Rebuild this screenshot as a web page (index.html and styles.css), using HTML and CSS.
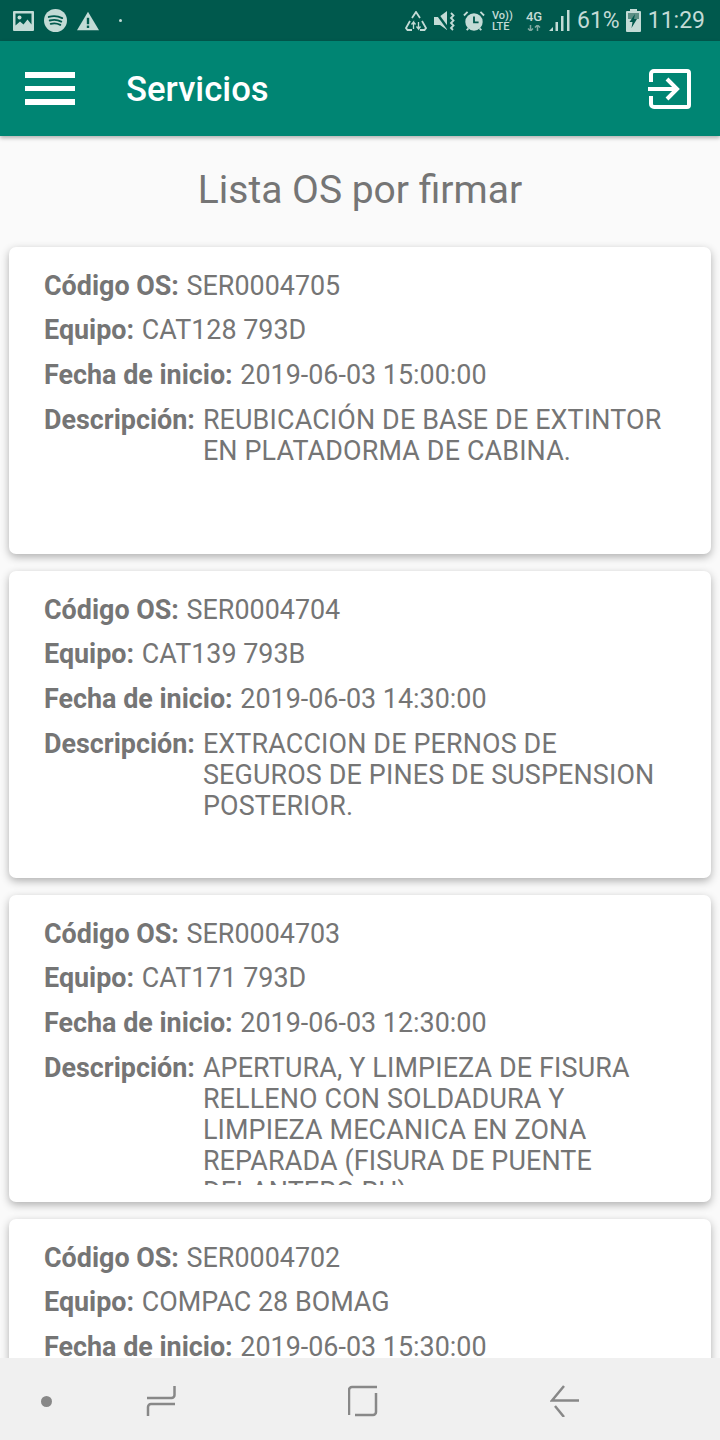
FILE: index.html
```html
<!DOCTYPE html>
<html lang="es">
<head>
    <meta charset="UTF-8">
    <meta name="viewport" content="width=device-width, initial-scale=1.0">
    <title>Servicios</title>
    <link rel="stylesheet" href="styles.css">
</head>
<body>
<div class="screen">

    <div class="status-bar">
        <div class="status-left">
            <svg width="21" height="20" viewBox="0 0 21 20">
                <path fill="#c3dbd6" fill-rule="evenodd" d="M1 0h19a1 1 0 0 1 1 1v18a1 1 0 0 1-1 1H1a1 1 0 0 1-1-1V1a1 1 0 0 1 1-1zM2.500 2.500v12l4.500-4 3.500 3 4-5 4 5V2.500z"/>
                <circle cx="6.500" cy="6.500" r="2" fill="#c3dbd6"/>
            </svg>
            <svg width="23" height="23" viewBox="0 0 24 24">
                <circle cx="12" cy="12" r="12" fill="#c3dbd6"/>
                <path d="M5 8.300c4.300-1.300 9.500-1 14 1.200M6 12c3.700-1 8.300-.8 12 1.100M7 15.500c3.200-.8 6.800-.6 10 1" fill="none" stroke="#00594d" stroke-width="2" stroke-linecap="round"/>
            </svg>
            <svg width="22" height="20" viewBox="0 0 24 20">
                <path fill="#c3dbd6" d="M12 0l12 20H0z"/>
                <rect x="10.700" y="6.500" width="2.600" height="7" fill="#00594d"/>
                <rect x="10.700" y="15" width="2.600" height="2.600" fill="#00594d"/>
            </svg>
            <span class="st-dot"></span>
        </div>
        <div class="status-right">
            <svg width="22" height="20" viewBox="0 0 22 20" fill="none" stroke="#c3dbd6" stroke-width="1.800">
                <path d="M7 7l4-6 4 6"/>
                <path d="M5 10l-4 7 1.500 2H7M17 10l4 7-1.500 2H15"/>
                <path d="M8.500 18v-7l-2 2.500M8.500 11l2 2.500M13.500 11v7l-2-2.500M13.500 18l2-2.500" stroke-width="1.300"/>
            </svg>
            <svg width="22" height="22" viewBox="0 0 22 22" fill="#c3dbd6">
                <path d="M0 7h5l8-6v19l-7-5H0z"/>
                <path d="M1 1l14 19" stroke="#00594d" stroke-width="2.500"/>
                <path d="M0 3l2.500 2.500L0 8l2.500 2.500L0 13l2.500 2.500L0 18l2 2" transform="translate(17 0)" fill="none" stroke="#c3dbd6" stroke-width="1.800"/>
            </svg>
            <svg width="22" height="22" viewBox="0 0 24 24">
                <circle cx="12" cy="13" r="9.500" fill="#c3dbd6"/>
                <path d="M12 7v6.500h5" fill="none" stroke="#00594d" stroke-width="2"/>
                <path d="M1 6l4-4M23 6l-4-4M4 22l2-2M20 22l-2-2" stroke="#c3dbd6" stroke-width="2"/>
            </svg>
            <div class="volte"><span>Vo))</span><span>LTE</span></div>
            <div class="net">
                <span>4G</span>
                <svg width="14" height="6" viewBox="0 0 14 6">
                    <path d="M3.500 6V0M1 3.500L3.500 6 6 3.500" fill="none" stroke="#7fa9a1" stroke-width="1.500"/>
                    <path d="M10.500 0v6M8 2.500L10.500 0 13 2.500" fill="none" stroke="#7fa9a1" stroke-width="1.500"/>
                </svg>
            </div>
            <svg width="21" height="21" viewBox="0 0 21 21" fill="#c3dbd6">
                <path d="M0 21l4-4v4z"/>
                <rect x="6.500" y="12" width="2.500" height="9"/>
                <rect x="12" y="6" width="2.500" height="15"/>
                <rect x="18" y="0" width="2.500" height="21"/>
            </svg>
            <span class="st-text st-battery">61%</span>
            <svg width="15" height="23" viewBox="0 0 15 23">
                <path fill="#c3dbd6" d="M4 0h7v2h3a1 1 0 0 1 1 1v19a1 1 0 0 1-1 1H1a1 1 0 0 1-1-1V3a1 1 0 0 1 1-1h3z"/>
                <rect x="2" y="4" width="11" height="6" fill="#5c8f85"/>
                <path fill="#00594d" d="M9 5L3.500 13h3l-1 6 5.500-9H8z"/>
            </svg>
            <span class="st-text">11:29</span>
        </div>
    </div>

    <div class="app-bar">
        <div class="menu-icon"><span></span><span></span><span></span></div>
        <div class="app-title">Servicios</div>
        <svg width="44" height="40" viewBox="0 0 44 40" fill="none" stroke="#ffffff" stroke-width="4">
            <path d="M4 13V5a3 3 0 0 1 3-3h33a2 2 0 0 1 2 2v32a2 2 0 0 1-2 2H7a3 3 0 0 1-3-3v-8" stroke-linejoin="round"/>
            <path d="M1 20h29M20 10l10 10-10 10"/>
        </svg>
    </div>

    <div class="content">
        <h1 class="page-title">Lista OS por firmar</h1>
        <div class="list">

            <div class="card">
                <div class="row"><b>Código OS:</b> SER0004705</div>
                <div class="row"><b>Equipo:</b> CAT128 793D</div>
                <div class="row"><b>Fecha de inicio:</b> 2019-06-03 15:00:00</div>
                <div class="desc-row">
                    <b>Descripción:</b>
                    <div class="desc">REUBICACIÓN DE BASE DE EXTINTOR EN PLATADORMA DE CABINA.</div>
                </div>
            </div>

            <div class="card">
                <div class="row"><b>Código OS:</b> SER0004704</div>
                <div class="row"><b>Equipo:</b> CAT139 793B</div>
                <div class="row"><b>Fecha de inicio:</b> 2019-06-03 14:30:00</div>
                <div class="desc-row">
                    <b>Descripción:</b>
                    <div class="desc">EXTRACCION DE PERNOS DE SEGUROS DE PINES DE SUSPENSION POSTERIOR.</div>
                </div>
            </div>

            <div class="card">
                <div class="row"><b>Código OS:</b> SER0004703</div>
                <div class="row"><b>Equipo:</b> CAT171 793D</div>
                <div class="row"><b>Fecha de inicio:</b> 2019-06-03 12:30:00</div>
                <div class="desc-row">
                    <b>Descripción:</b>
                    <div class="desc">APERTURA, Y LIMPIEZA DE FISURA RELLENO CON SOLDADURA Y LIMPIEZA MECANICA EN ZONA REPARADA (FISURA DE PUENTE DELANTERO RH)</div>
                </div>
            </div>

            <div class="card">
                <div class="row"><b>Código OS:</b> SER0004702</div>
                <div class="row"><b>Equipo:</b> COMPAC 28 BOMAG</div>
                <div class="row"><b>Fecha de inicio:</b> 2019-06-03 15:30:00</div>
            </div>

        </div>
    </div>

    <div class="nav-bar">
        <span class="nav-dot"></span>
        <svg width="30" height="32" viewBox="0 0 30 32" fill="none" stroke="#888888" stroke-width="2.500">
            <path d="M28.500 1v9a3 3 0 0 1-3 3H1"/>
            <path d="M29 19H5a3 3 0 0 0-3 3v9"/>
        </svg>
        <svg width="30" height="32" viewBox="0 0 30 32" fill="none" stroke="#888888" stroke-width="2.500">
            <path d="M29 2H4a3 3 0 0 0-3 3v25"/>
            <path d="M28 8v19a3 3 0 0 1-3 3H7"/>
        </svg>
        <svg width="30" height="32" viewBox="0 0 30 32" fill="none" stroke="#888888" stroke-width="2.500">
            <path d="M14 1L2 15.500h27"/>
            <path d="M5 21l9 11"/>
        </svg>
    </div>

</div>
</body>
</html>
```

FILE: styles.css
```css
body {
    margin: 0;
    font-family: Roboto, "Liberation Sans", sans-serif;
    color: #757575;
    background: #fafafa;
}

.screen {
    display: flex;
    flex-direction: column;
    width: 720px;
    height: 1440px;
    overflow: hidden;
}

.status-bar {
    display: flex;
    justify-content: space-between;
    align-items: center;
    height: 41px;
    flex-shrink: 0;
    padding: 0 15px 0 13px;
    box-sizing: border-box;
    background: #00594d;
    color: #c3dbd6;
}

.status-left {
    display: flex;
    align-items: center;
    gap: 10px;
}

.st-dot {
    width: 3px;
    height: 3px;
    margin-left: 10px;
    border-radius: 50%;
    background: #c3dbd6;
}

.status-right {
    display: flex;
    align-items: center;
    gap: 7px;
}

.st-text {
    font-size: 23px;
}

.st-battery {
    margin-right: -1px;
}

.volte {
    display: flex;
    flex-direction: column;
    width: 20px;
    font-size: 11px;
    font-weight: 500;
    line-height: 11px;
    margin-right: 7px;
}

.net {
    display: flex;
    flex-direction: column;
    align-items: center;
    gap: 2px;
    width: 16px;
    font-size: 13px;
    font-weight: 500;
    line-height: 13px;
}

.app-bar {
    display: flex;
    align-items: center;
    height: 95px;
    flex-shrink: 0;
    padding: 0 29px 0 25px;
    box-sizing: border-box;
    background: #008573;
    color: #ffffff;
    box-shadow: 0 2px 4px rgba(0, 0, 0, 0.3);
    position: relative;
}

.menu-icon {
    display: flex;
    flex-direction: column;
    gap: 8px;
    width: 50px;
    margin-right: 51px;
}

.menu-icon span {
    height: 5.500px;
    background: #ffffff;
}

.app-title {
    flex: 1;
    font-size: 34.700px;
    font-weight: 500;
    padding-top: 1px;
}

.content {
    flex: 1;
    min-height: 0;
    overflow: hidden;
}

.page-title {
    margin: 32px 0 35px;
    font-size: 39px;
    font-weight: 400;
    line-height: 44px;
    text-align: center;
    color: #757575;
}

.list {
    display: flex;
    flex-direction: column;
    gap: 17px;
    padding: 0 9px;
}

.card {
    height: 307px;
    flex-shrink: 0;
    padding: 20.500px 45px 0 35px;
    box-sizing: border-box;
    background: #ffffff;
    border-radius: 7px;
    box-shadow: 0 3px 9px rgba(0, 0, 0, 0.3);
    font-size: 26.900px;
}

.row {
    height: 44.500px;
    line-height: 36px;
}

.row b {
    margin-right: 1px;
}

.desc-row {
    display: flex;
    gap: 8px;
    margin-top: 1px;
    line-height: 36px;
}

.desc {
    flex: 1;
    max-height: 132px;
    overflow: hidden;
    line-height: 31px;
    padding-top: 3px;
    letter-spacing: 0.150px;
}

.nav-bar {
    display: flex;
    align-items: center;
    gap: 172px;
    height: 82px;
    flex-shrink: 0;
    padding: 4px 0 0 41px;
    box-sizing: border-box;
    background: #f0f0f0;
    position: relative;
}

.nav-dot {
    width: 11px;
    height: 11px;
    margin-right: -78px;
    border-radius: 50%;
    background: #888888;
}
```
